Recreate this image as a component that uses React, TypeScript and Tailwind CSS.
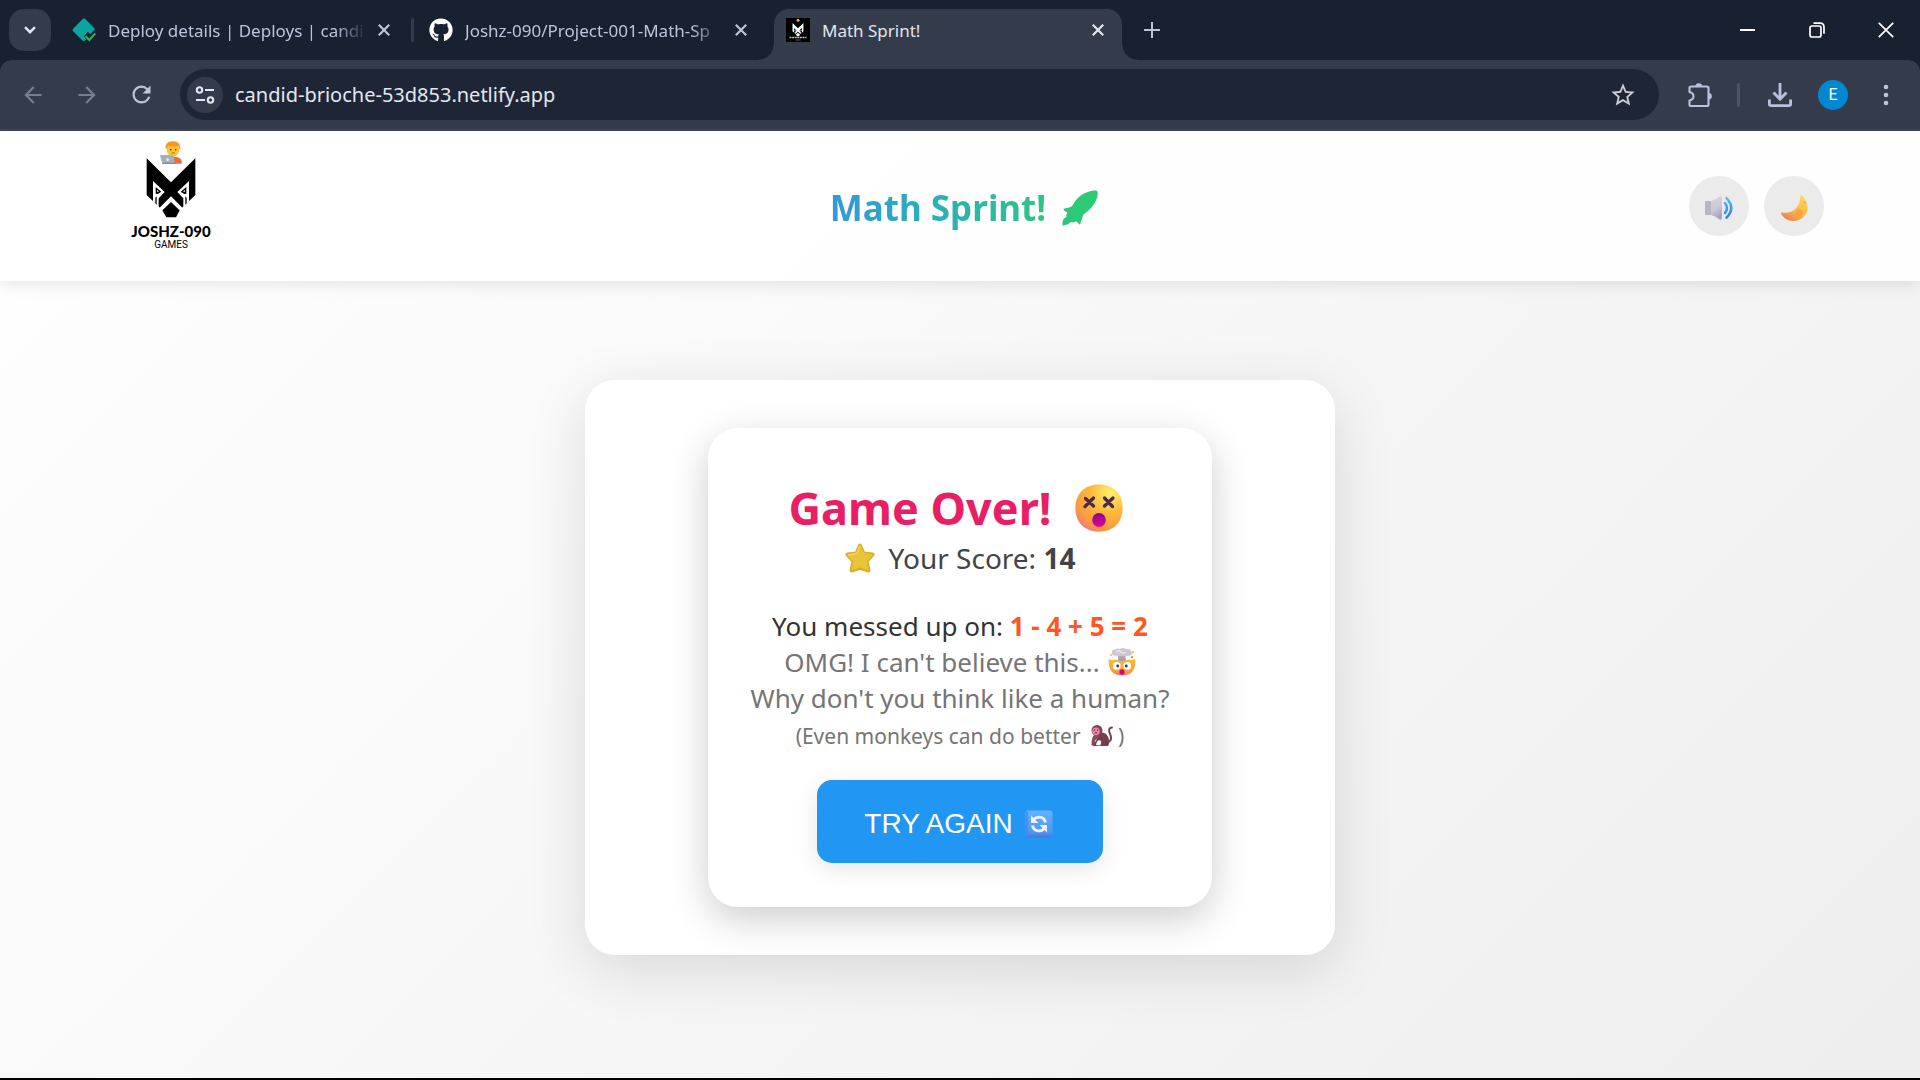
import React from "react";
import { FaGithub } from "react-icons/fa";
import { MdArrowBack, MdArrowForward, MdRefresh, MdStarBorder } from "react-icons/md";

type IconProps = { className?: string };

function CloseIcon({ className }: IconProps) {
  return (
    <svg viewBox="0 0 14 14" className={className} fill="none" stroke="currentColor" strokeWidth="2.2">
      <path d="M1.8 1.8l10.400 10.400M12.200 1.800L1.800 12.200" />
    </svg>
  );
}

function NetlifyCheckIcon() {
  return (
    <svg viewBox="0 0 24 24" className="size-6 shrink-0">
      <path d="M11 .8c.7-.5 1.300-.5 2 0l9.500 9.700c.4.5.5 1 .4 1.500L12.600 22.800c-.6.6-1.300.5-1.800 0L.9 13c-.5-.6-.5-1.300 0-2z" fill="#0aa5a0" />
      <path d="M12 18.300l3.800-4.600 2.700 2.500 3.300-4 3 3-6.800 9-2.600-1z" fill="#182130" />
      <path d="M13.500 18.200l3.800 3.800 6-6.600" stroke="#22b455" strokeWidth="2.200" fill="none" />
    </svg>
  );
}

function MascotShape({ fill, cut }: { fill: string; cut: string }) {
  return (
    <g>
      <path d="M140 86L213 158L286 86V196L240 240L228 263H199L186 240L140 196Z" fill={fill} />
      <path d="M159 154L194 187L176 206V236L170 231V200L166 204V222L159 215ZM267 154L232 187L250 206V236L256 231V200L260 204V222L267 215Z" fill={cut} />
      <path d="M167 172L184 186L173 193L167 192ZM259 172L242 186L253 193L259 192Z" fill={fill} />
      <path d="M171 181L177 185L172 188ZM255 181L249 185L254 188Z" fill={cut} />
      <path d="M213 200L248 235L241 244L213 217L185 244L178 235Z" fill={cut} />
    </g>
  );
}

function CoderFigure() {
  return (
    <g>
      <path d="M199 100V88Q206 80 219 80Q245 80 245 94V101H199Z" fill="#f4693c" />
      <circle cx="219" cy="60" r="19" fill="#fdc52e" />
      <path d="M197 58Q194 34 218 34Q243 33 241 60Q237 55 235 47Q218 52 205 47Q202 56 197 58Z" fill="#f39a1f" />
      <circle cx="212" cy="59" r="2.500" fill="#5b4232" />
      <circle cx="227" cy="59" r="2.500" fill="#5b4232" />
      <path d="M214 70Q219 66 225 70" stroke="#7a4a26" strokeWidth="2" fill="none" />
      <path d="M180 78Q180 75 183 75H217Q220 75 221 78L225 101H187Z" fill="#a3b1bd" />
      <path d="M186 98H226V102H187Z" fill="#7f909d" />
      <circle cx="203" cy="89" r="4" fill="#e6edf2" />
    </g>
  );
}

function MascotFavicon() {
  return (
    <svg viewBox="0 0 24 24" className="size-6 shrink-0">
      <path d="M0 0h24v24H0z" fill="#000" />
      <circle cx="12" cy="2.200" r="1.500" fill="#f5b52e" />
      <g transform="translate(-4 -1.500) scale(.075)">
        <MascotShape fill="#fff" cut="#000" />
      </g>
      <path d="M3.500 19.500h17" stroke="#bbb" strokeWidth="1.600" strokeDasharray="2 .6" />
      <path d="M9.500 22h5" stroke="#777" strokeWidth=".8" />
    </svg>
  );
}

function TuneIcon() {
  return (
    <svg viewBox="0 0 20 20" className="size-5" fill="none" stroke="#e3e6ee" strokeWidth="2.100">
      <circle cx="4.500" cy="5" r="2.700" />
      <path d="M10 5h9M1 15h9" />
      <circle cx="15.500" cy="15" r="2.700" />
    </svg>
  );
}

function PuzzleIcon() {
  return (
    <svg viewBox="0 0 26 26" className="size-[26px]">
      <path d="M2.500 6Q2.500 4.500 4 4.500H20Q21.500 4.500 21.500 6V22.500Q21.500 24 20 24H4Q2.500 24 2.500 22.500V18.500Q6.500 17.500 6.500 14.200Q6.500 11 2.500 10Z" fill="none" stroke="#b9c1dc" strokeWidth="2.100" strokeLinejoin="round" />
      <path d="M8.500 4.500a3.300 3.300 0 0 1 6.600 0zM21.500 11a3.300 3.300 0 0 1 0 6.600z" fill="#b9c1dc" />
    </svg>
  );
}

function DownloadIcon() {
  return (
    <svg viewBox="0 0 24 24" className="size-6" fill="none" stroke="#b9c1dc" strokeWidth="2.800">
      <path d="M12 0v16M5.500 9.500l6.500 6.700 6.500-6.700" />
      <path d="M1.400 16.500v5.100q0 1 1 1h19.200q1 0 1-1v-5.100" />
    </svg>
  );
}

function CoderIcon() {
  return (
    <svg viewBox="180 30 66 72" className="h-6 w-[22px]">
      <CoderFigure />
    </svg>
  );
}

function RocketIcon() {
  return (
    <svg viewBox="0 0 36 36" className="size-9 shrink-0">
      <defs>
        <linearGradient id="rocket" x1="0" x2="1">
          <stop offset="0" stopColor="#30c57e" />
          <stop offset="1" stopColor="#2ecc71" />
        </linearGradient>
      </defs>
      <path d="M35 1C36 2 36 5 34.800 8.500C33 14 28 20 21.500 24.500C20 27 19.800 31 18 34.500C16.500 34.800 16 32 14.500 31.500C12.500 31 11.500 33.500 9.500 32C8.500 31.500 8 33.500 6 34C5 34.500 5 35.500 4 34.500C3 35.500 .5 36 .5 35C.3 31 1 28.500 4.500 27C3.500 25 5.500 23.500 5 22.500C4 21.500 1.500 21 1.500 19C4.500 17.500 8.500 18 10.500 15.500C14 9 18 5 25 2.300C29 .7 34 0 35 1Z" fill="url(#rocket)" />
    </svg>
  );
}

function SpeakerIcon() {
  return (
    <svg viewBox="0 0 30 26" className="mt-1 h-[26px] w-[30px]">
      <defs>
        <linearGradient id="cone" x1="0" x2=".3" y1="0" y2="1">
          <stop offset="0" stopColor="#d8d5de" />
          <stop offset=".6" stopColor="#cdc8d8" />
          <stop offset="1" stopColor="#aaa2bd" />
        </linearGradient>
        <linearGradient id="wave" y1="0" y2="1" x2="0">
          <stop offset="0" stopColor="#53bdf5" />
          <stop offset="1" stopColor="#2f7de9" />
        </linearGradient>
      </defs>
      <path d="M1 7Q1 6 2 6H8V20H2Q1 20 1 19Z" fill="#bab5c1" />
      <path d="M7 6Q12 5 15.500 1.500Q18 .5 18 4V22Q18 26 15.500 24.500Q12 21 7 20Z" fill="url(#cone)" />
      <path d="M18 9.500a3.500 3.500 0 0 1 0 7z" fill="#e9e7ee" />
      <path d="M21 8q4 5 0 10M22.500 3.200q9.500 10 0 19.500" stroke="url(#wave)" strokeWidth="2.500" fill="none" strokeLinecap="round" />
    </svg>
  );
}

function MoonIcon() {
  return (
    <svg viewBox="0 0 28 28" className="mt-1 size-7">
      <defs>
        <linearGradient id="moon" x1=".8" y1="0" x2=".3" y2="1">
          <stop offset="0" stopColor="#ffd75e" />
          <stop offset=".6" stopColor="#fdb548" />
          <stop offset="1" stopColor="#ee8052" />
        </linearGradient>
      </defs>
      <path d="M21.500 1C28 7 30 16 24 22.500C17 29.500 5 28 1 19.500C.6 18.500 1.500 18.500 2.500 18.700C12 20 20 14 20.500 2C20.600.8 21 .6 21.500 1Z" fill="url(#moon)" />
      <circle cx="19.500" cy="18.500" r="2.800" fill="#f9a844" stroke="#f2993a" strokeWidth=".7" />
      <circle cx="11.500" cy="22.500" r="1.600" fill="#f19a48" />
      <circle cx="24.500" cy="8.500" r="1.300" fill="#f9b04a" />
    </svg>
  );
}

function DizzyFace() {
  return (
    <svg viewBox="0 0 48 48" className="size-12 shrink-0">
      <defs>
        <radialGradient id="face" cx=".74" cy=".18" r=".95">
          <stop offset="0" stopColor="#fff06a" />
          <stop offset=".45" stopColor="#fdb93c" />
          <stop offset=".82" stopColor="#f9983e" />
          <stop offset="1" stopColor="#e8739a" />
        </radialGradient>
        <linearGradient id="mouth" x1="0" x2="0" y1="0" y2="1">
          <stop offset="0" stopColor="#8a00a3" />
          <stop offset="1" stopColor="#e4078c" />
        </linearGradient>
      </defs>
      <path d="M24 .4C38.500 .4 47.600 9.500 47.600 24S38.500 47.700 24 47.700S.4 38.500 .4 24S9.500 .4 24 .4Z" fill="url(#face)" />
      <path d="M10.500 14.500l8 7.500M18.500 14l-8.500 8.500M29.500 14l8 8.500M38 14l-8.500 8" stroke="#4c2a50" strokeWidth="3.300" strokeLinecap="round" />
      <ellipse cx="24" cy="36" rx="6.800" ry="7" fill="url(#mouth)" />
    </svg>
  );
}

function StarIcon() {
  return (
    <svg viewBox="0 0 30 30" className="size-[30px] shrink-0">
      <path d="M15 2.500L18.500 10.500L27.500 11.500L21.500 18.500L23.500 27.500L15 24.800L6.500 27.500L8.500 18.500L2.500 11.500L11.500 10.500Z" fill="#e8c234" stroke="#d9ae30" strokeWidth="4" strokeLinejoin="round" />
      <path d="M15 3L18.500 10.500L27 12L21 18.500L22.500 26.500L15 23.500L7.500 26.500L9 18.500L3 12L11.500 10.500Z" fill="#e9c436" stroke="#e9c436" strokeWidth="1.500" strokeLinejoin="round" />
      <path d="M14.500 3.500L12 10.500L4 12" fill="none" stroke="#f3d955" strokeWidth="1.300" strokeLinecap="round" />
    </svg>
  );
}

function MindBlownFace() {
  return (
    <svg viewBox="0 0 28 28" className="size-7 shrink-0">
      <defs>
        <linearGradient id="blown" x1="0" x2="0" y1="0" y2="1">
          <stop offset="0" stopColor="#fdbb2d" />
          <stop offset=".75" stopColor="#f8a13a" />
          <stop offset="1" stopColor="#ee6f86" />
        </linearGradient>
      </defs>
      <path d="M.8 11Q4 13 7 11.500L14 13L21 11.500Q24 13 27.200 11Q28.500 27.500 14 27.500Q-.5 27.500 .8 11Z" fill="url(#blown)" />
      <path d="M10.500 5.500H17L18 12.500Q14 14.500 10 12.500Z" fill="#a9a2ae" />
      <path d="M4 5Q3 1.500 7 1.500Q9-.3 12 1Q15-1 18 1Q22 0 23 3Q26 5 22.500 7.500Q14 9 6 7.500Q3.500 7 4 5Z" fill="#cdc7d2" />
      <path d="M8 4q3-2 5 0t5 0" stroke="#e8e5ec" strokeWidth="1.500" fill="none" />
      <circle cx="3" cy="7" r="1" fill="#f4b62b" />
      <circle cx="25" cy="4" r="1" fill="#f4b62b" />
      <circle cx="24" cy="9" r="1.200" fill="#e9a42b" />
      <circle cx="8.700" cy="17.800" r="3.900" fill="#fff" />
      <circle cx="19.300" cy="17.800" r="3.900" fill="#fff" />
      <circle cx="9.700" cy="18" r="1.400" fill="#4c2a50" />
      <circle cx="18.300" cy="18" r="1.400" fill="#4c2a50" />
      <ellipse cx="14" cy="24" rx="2.600" ry="2.800" fill="#c90a86" />
    </svg>
  );
}

function MonkeyIcon() {
  return (
    <svg viewBox="0 0 24 22" className="h-[22px] w-6 shrink-0">
      <path d="M15 18Q23 17 20.500 10Q17 3 22 2.500" stroke="#7b4352" strokeWidth="2" fill="none" strokeLinecap="round" />
      <path d="M8 8Q16 6 18.500 13Q20 18 18 21H4Q1 20.500 2 19L6 16Z" fill="#74404f" />
      <path d="M5.500 9Q1 12 1.500 20H4Q4.500 14 9 12Z" fill="#8a4b5a" />
      <path d="M6 20Q7 14 10.500 15.500Q12 17 10 20.500Z" fill="#fff" />
      <circle cx="7" cy="5.500" r="5.500" fill="#7d4654" />
      <ellipse cx="6" cy="6.300" rx="3.700" ry="3.900" fill="#e88fa8" />
      <ellipse cx="6" cy="7.800" rx="1.500" ry="1" fill="#d8288c" />
      <circle cx="4.600" cy="5" r=".7" fill="#442032" />
      <circle cx="7.600" cy="5" r=".7" fill="#442032" />
    </svg>
  );
}

function RefreshBadge() {
  return (
    <svg viewBox="0 0 28 28" className="size-7 shrink-0">
      <defs>
        <linearGradient id="badge" x1="0" x2="0" y1="0" y2="1">
          <stop offset="0" stopColor="#62b4ff" />
          <stop offset=".8" stopColor="#4f97f0" />
          <stop offset="1" stopColor="#4478e0" />
        </linearGradient>
      </defs>
      <rect x=".5" y=".5" width="27" height="27" rx="2.500" fill="url(#badge)" />
      <path d="M2 2v24" stroke="#4a86e6" strokeWidth="1.500" />
      <path d="M8.500 9.500Q12 6 16.500 7.500Q20 9 20.500 12.500M19.500 18.500Q16 22 11.500 20.500Q8 19 7.500 15.500" stroke="#f5f0ff" strokeWidth="2.800" fill="none" />
      <path d="M6 5.500V13H13.500ZM22 22.500V15H14.500Z" fill="#f5f0ff" />
    </svg>
  );
}

function Tab({ icon, title, active = false, divider = false }: { icon: React.ReactNode; title: string; active?: boolean; divider?: boolean }) {
  return (
    <>
      <div className={active ? "relative flex h-full w-[348px] items-center rounded-t-[15px] bg-[#343c4c] px-3 pb-[9px] text-[#e3e6ee]" : "flex h-full w-[348px] items-center px-3 pb-[9px] text-[#bcc4da]"}>
        {active && (
          <>
            <span className="absolute bottom-0 -left-[15px] size-[15px] bg-[radial-gradient(circle_at_0_0,transparent_14px,#343c4c_15px)]" />
            <span className="absolute -right-[15px] bottom-0 size-[15px] bg-[radial-gradient(circle_at_100%_0,transparent_14px,#343c4c_15px)]" />
          </>
        )}
        {icon}
        <span className={active ? "ml-3 flex-1 pt-[2px] text-[17px] leading-6 whitespace-nowrap" : "ml-3 flex-1 pt-[2px] text-[17px] leading-6 whitespace-nowrap [mask-image:linear-gradient(to_right,#000_88%,transparent)]"}>{title}</span>
        <button aria-label={"Close " + title} className="ml-[6px] flex size-6 shrink-0 items-center justify-center">
          <CloseIcon className="size-[14px]" />
        </button>
      </div>
      <span className={divider ? "mx-[3px] mb-[9px] h-6 w-[3px] rounded-full bg-[#343c4c]" : "mx-[3px] w-[3px]"} />
    </>
  );
}

function BrowserChrome() {
  return (
    <div className="bg-[#182130] font-['Noto_Sans',sans-serif]">
      <div className="flex h-[60px] items-center pt-[9px] pl-[9px]">
        <button aria-label="Search tabs" className="mr-[9px] mb-[9px] flex size-[42px] items-center justify-center rounded-[15px] bg-[#343c4c]">
          <svg viewBox="0 0 12 8" className="h-2 w-3" fill="none" stroke="#e3e6ee" strokeWidth="2.400">
            <path d="M1 1.200l5 5 5-5" />
          </svg>
        </button>
        <Tab icon={<NetlifyCheckIcon />} title="Deploy details | Deploys | candi" divider />
        <Tab icon={<FaGithub className="size-6 shrink-0 text-white" />} title="Joshz-090/Project-001-Math-Sp" />
        <Tab icon={<MascotFavicon />} title="Math Sprint!" active />
        <button aria-label="New tab" className="mb-[9px] ml-[9px] flex size-6 items-center justify-center text-[#bcc4da]">
          <svg viewBox="0 0 16 16" className="size-4" fill="none" stroke="currentColor" strokeWidth="2">
            <path d="M8 0v16M0 8h16" />
          </svg>
        </button>
        <div className="mb-[9px] ml-auto flex h-full items-center text-white">
          <button aria-label="Minimize" className="flex h-10 w-[69px] items-center justify-center">
            <span className="h-[2px] w-[15px] bg-white" />
          </button>
          <button aria-label="Restore" className="flex h-10 w-[69px] items-center justify-center">
            <svg viewBox="0 0 16 16" className="size-4" fill="none" stroke="currentColor" strokeWidth="1.700">
              <rect x="1" y="4" width="11" height="11" rx="2" />
              <path d="M4.500 1.200H11q4 0 4 4v6.500" />
            </svg>
          </button>
          <button aria-label="Close window" className="flex h-10 w-[69px] items-center justify-center">
            <svg viewBox="0 0 16 16" className="size-4" fill="none" stroke="currentColor" strokeWidth="1.700">
              <path d="M.8.8l14.400 14.400M15.200.8L.8 15.200" />
            </svg>
          </button>
        </div>
      </div>
      <div className="flex h-[71px] items-center rounded-t-xl border-b-2 border-[#3f4757] bg-[#343c4c] px-5 text-[#bcc4da]">
        <button aria-label="Back" className="mr-7 text-[#767e8e]"><MdArrowBack className="size-[26px]" /></button>
        <button aria-label="Forward" className="mr-7 text-[#767e8e]"><MdArrowForward className="size-[26px]" /></button>
        <button aria-label="Reload" className="mr-[25px]"><MdRefresh className="size-[27px]" /></button>
        <div className="flex h-[51px] flex-1 items-center rounded-full bg-[#1e2636] pr-[22px] pl-[7px]">
          <button aria-label="View site information" className="flex size-9 items-center justify-center rounded-full bg-[#343c4c]"><TuneIcon /></button>
          <input aria-label="Address" defaultValue="candid-brioche-53d853.netlify.app" className="ml-3 flex-1 bg-transparent text-[20px] leading-7 text-[#e3e6ee] outline-none" />
          <button aria-label="Bookmark this page" className="text-[#c9ccd4]"><MdStarBorder className="size-7" /></button>
        </div>
        <div className="ml-7 flex items-center">
          <button aria-label="Extensions"><PuzzleIcon /></button>
          <span className="mx-6 h-6 w-[3px] rounded-full bg-[#4b5365]" />
          <button aria-label="Downloads" className="ml-1"><DownloadIcon /></button>
          <button aria-label="Profile" className="mr-6 ml-[26px] flex size-[30px] items-center justify-center rounded-full bg-[#0288d1] font-[Roboto,sans-serif] text-base text-white">E</button>
          <button aria-label="Menu" className="flex w-7 justify-center">
            <svg viewBox="0 0 6 22" className="h-[22px] w-[6px]" fill="currentColor">
              <circle cx="3" cy="3" r="2.300" />
              <circle cx="3" cy="11" r="2.300" />
              <circle cx="3" cy="19" r="2.300" />
            </svg>
          </button>
        </div>
      </div>
    </div>
  );
}

function SiteHeader() {
  return (
    <header className="relative grid h-[150px] grid-cols-[1fr_auto_1fr] items-center bg-white/90 px-24 shadow-[0_3px_15px_rgba(0,0,0,0.1)]">
      <div className="flex w-[150px] flex-col items-center pb-[22px]">
        <CoderIcon />
        <svg viewBox="138 85 150 180" className="-mt-[6px] h-[60px] w-[50px]">
          <MascotShape fill="#000" cut="#fff" />
        </svg>
        <strong className="mt-1 font-[Lato,sans-serif] text-[15px] leading-[18px] font-black text-black">JOSHZ-090</strong>
        <span className="font-[Roboto,sans-serif] text-[10px] leading-[10px] text-black">GAMES</span>
      </div>
      <h1 className="flex items-center gap-4 pt-1 pl-2 text-[35px] leading-[48px] font-bold">
        <span className="bg-gradient-to-r from-[#3498db] to-[#30c484] bg-clip-text text-transparent">Math Sprint!</span>
        <RocketIcon />
      </h1>
      <div className="flex justify-end gap-[15px]">
        <button aria-label="Toggle sound" className="flex size-[60px] items-center justify-center rounded-full bg-[#ebebeb]"><SpeakerIcon /></button>
        <button aria-label="Toggle dark mode" className="flex size-[60px] items-center justify-center rounded-full bg-[#ebebeb]"><MoonIcon /></button>
      </div>
    </header>
  );
}

function GameOverCard() {
  return (
    <section className="flex w-full max-w-[750px] justify-center rounded-[30px] bg-white p-12 shadow-[0_15px_60px_rgba(0,0,0,0.12)]">
      <div className="flex w-full max-w-[504px] flex-col items-center rounded-[30px] bg-white px-10 pt-[46px] pb-11 text-center whitespace-nowrap shadow-[0_12px_38px_rgba(0,0,0,0.2)]">
        <h2 className="flex items-center gap-6 pr-2 text-[45px] leading-[68px] font-bold text-[#e91e63]">
          Game Over! <DizzyFace />
        </h2>
        <p className="flex items-center gap-[14px] text-[28px] leading-8 text-[#444]">
          <StarIcon />
          <span>Your Score: <strong>14</strong></span>
        </p>
        <div className="mt-[34px] text-[26px] leading-9 text-[#757575]">
          <p className="text-[#333]">You messed up on: <strong className="text-[#ff5722]">1 - 4 + 5 = 2</strong></p>
          <p className="flex items-center justify-center gap-2">OMG! I can't believe this... <MindBlownFace /></p>
          <p>Why don't you think like a human?</p>
          <p className="flex items-center justify-center text-[21px] leading-10">
            (Even monkeys can do better&nbsp;<span className="mx-1"><MonkeyIcon /></span>)
          </p>
        </div>
        <button className="mt-6 flex h-[83px] items-center gap-3 rounded-[15px] bg-[#2196f3] pt-1 pr-[50px] pl-[47px] font-['Liberation_Sans',sans-serif] text-[28px] text-white shadow-[0_6px_23px_rgba(0,0,0,0.1)]">
          TRY AGAIN <RefreshBadge />
        </button>
      </div>
    </section>
  );
}

export default function App() {
  return (
    <div className="flex min-h-screen flex-col border-b-2 border-black font-['Noto_Sans',sans-serif]">
      <BrowserChrome />
      <div className="flex flex-1 flex-col bg-linear-135 from-white to-[#eeeeee]">
        <SiteHeader />
        <main className="flex flex-1 items-center justify-center pb-6">
          <GameOverCard />
        </main>
      </div>
    </div>
  );
}
